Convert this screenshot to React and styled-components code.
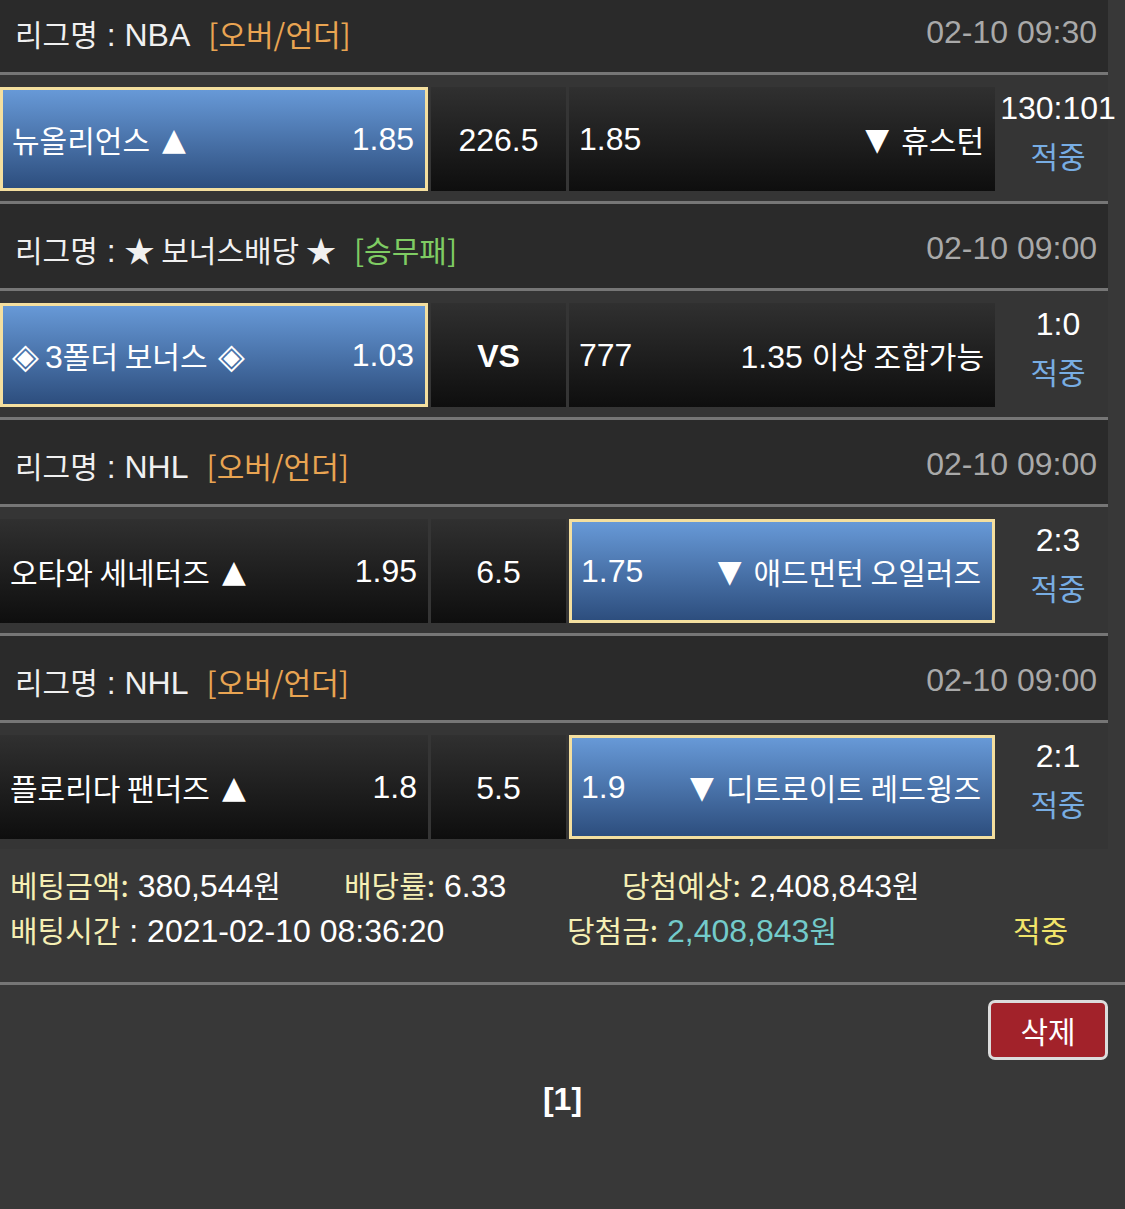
import React from 'react';
import styled, { createGlobalStyle } from 'styled-components';

const GlobalStyle = createGlobalStyle`
  body {
    margin: 0;
    background: #383838;
    font-family: "Liberation Sans", "Noto Sans CJK KR", sans-serif;
  }
`;

const Page = styled.div`
  width: 1125px;
  min-height: 1209px;
  background: #383838;
  overflow: hidden;
  color: #f2f2f2;
  font-size: 32px;
`;

const List = styled.div`
  width: 1108px;
  margin-top: -12px;
`;

const Ko = styled.span`
  font-family: "Noto Sans CJK KR", sans-serif;
  font-size: 30px;
`;

const Tri = styled.span`
  font-family: "DejaVu Sans", sans-serif;
  font-size: 31px;
  line-height: 1;
  vertical-align: 2px;
  margin: ${(p) => (p.$down ? '0 12px 0 0' : '0 0 0 12px')};
`;

const Diamond = styled.span`
  font-family: "Noto Sans CJK KR", sans-serif;
  font-size: 35px;
  line-height: 1;
  margin: ${(p) => (p.$end ? '0 0 0 10px' : '0 6px 0 0')};
`;

const Header = styled.div`
  box-sizing: border-box;
  height: 84px;
  display: flex;
  align-items: center;
  justify-content: space-between;
  padding: 5px 11px 0 15px;
  background: #2a2a2a;
  color: #f0f0f0;
`;

const Tag = styled(Ko)`
  margin-left: 18px;
  color: ${(p) => (p.$kind === 'green' ? '#7fcc63' : '#e9a452')};
`;

const Time = styled.span`
  color: #a9a9a9;
`;

const Line = styled.div`
  height: 3px;
  background: #767676;
  width: ${(p) => (p.$full ? '1125px' : '1108px')};
`;

const Row = styled.div`
  display: grid;
  grid-template-columns: 428px 135px 426px 120px;
  column-gap: 3px;
  padding: 12px 0 10px;
  background: #353535;
`;

const Cell = styled.div`
  box-sizing: border-box;
  height: 104px;
  display: flex;
  align-items: center;
  justify-content: ${(p) => (p.$center ? 'center' : 'space-between')};
  padding: ${(p) => (p.$center ? '3px 0 0' : p.$on ? '0 11px 0 9px' : '0 11px 0 10px')};
  color: #fff;
  white-space: nowrap;
  border: ${(p) => (p.$on ? '3px solid #f4df9f' : 'none')};
  background: ${(p) =>
    p.$on
      ? 'linear-gradient(#6799d7, #2d4e7e)'
      : 'linear-gradient(#303030, #0e0e0e)'};
`;

const Vs = styled.span`
  font-weight: bold;
`;

const Score = styled.div`
  height: 104px;
  display: flex;
  flex-direction: column;
  align-items: center;
  line-height: 42px;
  color: #fff;
  white-space: nowrap;
`;

const Hit = styled(Ko)`
  margin-top: ${(p) => (p.$color ? 0 : '5px')};
  color: ${(p) => p.$color || '#78ade3'};
`;

const Summary = styled.div`
  padding: 12px 0 31px 10px;
  color: #fff;
`;

const SumLine = styled.div`
  display: flex;
  align-items: center;
  height: 45px;
  white-space: nowrap;
`;

const SumItem = styled.div`
  width: ${(p) => p.$w}px;
`;

const Label = styled(Ko)`
  color: #f5efb4;
`;

const Money = styled.span`
  color: ${(p) => (p.$cyan ? '#73cbcb' : '#fff')};
`;

const Footer = styled.div`
  display: flex;
  flex-direction: column;
  align-items: center;
  padding-top: 15px;
`;

const ButtonRow = styled.div`
  width: 100%;
  display: flex;
  justify-content: flex-end;
  padding-right: 17px;
  box-sizing: border-box;
`;

const DeleteButton = styled.button`
  width: 120px;
  height: 60px;
  border: 3px solid #dcdcdc;
  border-radius: 7px;
  background: #a2222a;
  color: #fff;
  font-family: "Noto Sans CJK KR", sans-serif;
  font-size: 30px;
  padding: 0;
`;

const Pager = styled.div`
  margin-top: 21px;
  font-weight: bold;
  color: #fff;
`;

const Up = () => <Tri>▲</Tri>;
const Down = () => <Tri $down>▼</Tri>;

const games = [
  {
    league: 'NBA',
    tag: '[오버/언더]',
    time: '02-10 09:30',
    left: [<><Ko>뉴올리언스</Ko><Up /></>, '1.85'],
    mid: '226.5',
    right: ['1.85', <><Down /><Ko>휴스턴</Ko></>],
    pick: 'left',
    score: '130:101',
  },
  {
    league: <Ko>★ 보너스배당 ★</Ko>,
    tag: '[승무패]',
    green: true,
    time: '02-10 09:00',
    left: [<><Diamond>◈</Diamond>3<Ko>폴더 보너스</Ko><Diamond $end>◈</Diamond></>, '1.03'],
    mid: <Vs>VS</Vs>,
    right: ['777', <>1.35 <Ko>이상 조합가능</Ko></>],
    pick: 'left',
    score: '1:0',
  },
  {
    league: 'NHL',
    tag: '[오버/언더]',
    time: '02-10 09:00',
    left: [<><Ko>오타와 세네터즈</Ko><Up /></>, '1.95'],
    mid: '6.5',
    right: ['1.75', <><Down /><Ko>애드먼턴 오일러즈</Ko></>],
    pick: 'right',
    score: '2:3',
  },
  {
    league: 'NHL',
    tag: '[오버/언더]',
    time: '02-10 09:00',
    left: [<><Ko>플로리다 팬더즈</Ko><Up /></>, '1.8'],
    mid: '5.5',
    right: ['1.9', <><Down /><Ko>디트로이트 레드윙즈</Ko></>],
    pick: 'right',
    score: '2:1',
  },
];

export default function App() {
  return (
    <Page>
      <GlobalStyle />
      <List>
        {games.map((g, i) => (
          <React.Fragment key={i}>
            <Header>
              <span>
                <Ko>리그명</Ko> : {g.league}
                <Tag $kind={g.green ? 'green' : 'orange'}>{g.tag}</Tag>
              </span>
              <Time>{g.time}</Time>
            </Header>
            <Line />
            <Row>
              <Cell $on={g.pick === 'left'}>
                <span>{g.left[0]}</span>
                <span>{g.left[1]}</span>
              </Cell>
              <Cell $center>{g.mid}</Cell>
              <Cell $on={g.pick === 'right'}>
                <span>{g.right[0]}</span>
                <span>{g.right[1]}</span>
              </Cell>
              <Score>
                <span>{g.score}</span>
                <Hit>적중</Hit>
              </Score>
            </Row>
            {i < games.length - 1 && <Line />}
          </React.Fragment>
        ))}
      </List>
      <Summary>
        <SumLine>
          <SumItem $w={334}>
            <Label>베팅금액:</Label> 380,544<Ko>원</Ko>
          </SumItem>
          <SumItem $w={278}>
            <Label>배당률:</Label> 6.33
          </SumItem>
          <SumItem>
            <Label>당첨예상:</Label> 2,408,843<Ko>원</Ko>
          </SumItem>
        </SumLine>
        <SumLine>
          <SumItem $w={557}>
            <Label>배팅시간</Label> : 2021-02-10 08:36:20
          </SumItem>
          <SumItem $w={446}>
            <Label>당첨금:</Label> <Money $cyan>2,408,843<Ko>원</Ko></Money>
          </SumItem>
          <SumItem>
            <Hit $color="#f1e46a">적중</Hit>
          </SumItem>
        </SumLine>
      </Summary>
      <Line $full />
      <Footer>
        <ButtonRow>
          <DeleteButton>삭제</DeleteButton>
        </ButtonRow>
        <Pager>[1]</Pager>
      </Footer>
    </Page>
  );
}
